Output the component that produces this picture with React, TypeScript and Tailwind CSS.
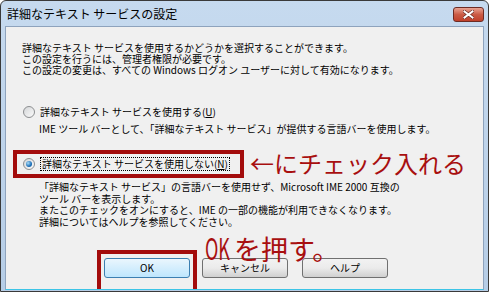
import React from "react";

const jp = { fontFamily: '"Noto Sans CJK JP", "Noto Sans", sans-serif' };

function Radio({ checked }: { checked?: boolean }) {
  return (
    <span className="relative flex h-[12px] w-[12px] shrink-0 items-center justify-center rounded-full border border-[#8c8e90] bg-gradient-to-br from-[#d4d6d8] to-[#fbfbfb]">
      {checked && (
        <span className="h-[6px] w-[6px] rounded-full bg-[radial-gradient(circle_at_35%_35%,#a9dcf8,#1c6fb8_60%,#0d4f8c)]" />
      )}
    </span>
  );
}

function Btn({ label, primary }: { label: string; primary?: boolean }) {
  return (
    <button
      className={
        "flex h-[20px] w-[86px] items-center justify-center rounded-[3px] border text-[10px] leading-none text-black " +
        (primary
          ? "border-[#3c7fb1] bg-gradient-to-b from-[#eaf6fd] to-[#bee6fd]"
          : "border-[#707070] bg-gradient-to-b from-[#f2f2f2] via-[#ebebeb] to-[#d0d0d0]")
      }
    >
      {label}
    </button>
  );
}

export default function App() {
  return (
    <div
      className="relative flex h-[292px] w-[489px] flex-col overflow-hidden rounded-t-[6px] border border-[#3a3a3a] bg-gradient-to-b from-[#c6daef] to-[#b6cde6]"
      style={jp}
    >
      {/* title bar */}
      <div className="flex h-[25px] shrink-0 items-center justify-between pl-[6px] pr-[4px]">
        <span className="text-[12px] leading-none text-black">詳細なテキスト サービスの設定</span>
        <div className="mt-[1px] flex h-[15px] w-[31px] items-center justify-center rounded-[3px] border border-[#6d2b23] bg-gradient-to-b from-[#e8a393] via-[#cb5b45] to-[#c0402a]">
          <svg width="11" height="9" viewBox="0 0 11 9">
            <path d="M1.5 1.5 L9.5 7.5 M9.5 1.5 L1.5 7.5" stroke="#6a2a22" strokeWidth="3.4" strokeLinecap="square" />
            <path d="M1.5 1.5 L9.5 7.5 M9.5 1.5 L1.5 7.5" stroke="#ffffff" strokeWidth="2" strokeLinecap="square" />
          </svg>
        </div>
      </div>

      {/* client area */}
      <div className="mx-[4px] mb-[1px] flex flex-1 flex-col border border-[#8ea3bd] border-b-[#3cc4e6] bg-[#f0f0f0] pl-[16px] text-[10px] leading-[11px] text-black">
        <div className="mt-[15px]">
          <p>詳細なテキスト サービスを使用するかどうかを選択することができます。</p>
          <p>この設定を行うには、管理者権限が必要です。</p>
          <p>この設定の変更は、すべての Windows ログオン ユーザーに対して有効になります。</p>
        </div>

        <div className="mt-[31px] flex items-center gap-[5px] pl-[1px]">
          <Radio />
          <span className="leading-[12px]">
            詳細なテキスト サービスを使用する(<span className="underline">U</span>)
          </span>
        </div>
        <p className="mt-[5px] pl-[17px]">IME ツール バーとして、「詳細なテキスト サービス」が提供する言語バーを使用します。</p>

        <div className="-ml-[9px] mt-[16px] flex w-[231px] items-center gap-[5px] border-[4px] border-[#a30c0c] py-[3px] pl-[6px]">
          <Radio checked />
          <span className="border border-dotted border-black px-[1px] leading-[12px]">
            詳細なテキスト サービスを使用しない(<span className="underline">N</span>)
          </span>
        </div>
        <div className="mt-[3px] pl-[17px] leading-[11.5px]">
          <p>「詳細なテキスト サービス」の言語バーを使用せず、Microsoft IME 2000 互換の</p>
          <p>ツール バーを表示します。</p>
          <p>またこのチェックをオンにすると、IME の一部の機能が利用できなくなります。</p>
          <p>詳細についてはヘルプを参照してください。</p>
        </div>

        <div className="mt-auto flex items-start gap-[5px] pl-[75px]">
          <div className="border-[4px] border-b-0 border-[#a30c0c] px-[3px] pb-[11px] pt-[4px]">
            <Btn label="OK" primary />
          </div>
          <div className="flex gap-[14px] pt-[8px]">
            <Btn label="キャンセル" />
            <Btn label="ヘルプ" />
          </div>
        </div>
      </div>

      {/* annotations */}
      <span className="absolute left-[249px] top-[150px] text-[24px] leading-none text-[#a80f0f]">←にチェック入れる</span>
      <span className="absolute left-[204px] top-[231px] flex items-baseline text-[27px] leading-none text-[#a80f0f]">
        <span className="inline-block w-[29px] origin-left scale-x-[0.6] text-[30px]">OK</span>
        <span>を押す。</span>
      </span>
    </div>
  );
}
